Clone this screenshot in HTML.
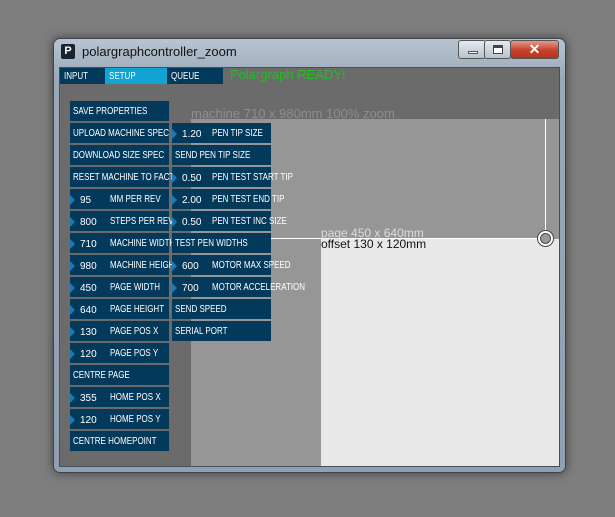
<!DOCTYPE html>
<html><head><style>
*{margin:0;padding:0;box-sizing:border-box}
body{width:615px;height:517px;background:#7e7e7e;position:relative;overflow:hidden;font-family:"Liberation Sans",sans-serif}
.win{position:absolute;left:53px;top:38px;width:513px;height:435px;border-radius:7px;background:linear-gradient(#b9c4d0,#9aa8b8 40px,#8fa0b2);box-shadow:0 0 10px rgba(0,0,0,.5);border:1px solid #3c4450}
.title{position:absolute;left:82px;top:44px;font-size:13px;color:#111}
.ico{position:absolute;left:61px;top:44px;width:14px;height:15px;background:#1a2430;border-radius:2px;color:#fff;font-size:11px;line-height:14px;text-align:center;font-weight:bold}
.client{position:absolute;left:59px;top:67px;width:501px;height:400px;background:#6b6b6b;overflow:hidden;border:1px solid #45505c}
.abs{position:absolute}
.b{position:absolute;width:99px;height:20px;background:#033a5b;color:#fff;font-size:10px;line-height:20px;white-space:nowrap;padding-left:3px;padding-top:1px}
.b s{text-decoration:none;display:inline-block;transform:scaleX(.8);transform-origin:0 50%;line-height:20px;vertical-align:top}
.b .n{position:absolute;left:10px;top:2px}
.b .l{position:absolute;left:40px;top:1px}
.b .t{position:absolute;left:0;top:6px;width:0;height:0;border-top:5px solid transparent;border-bottom:5px solid transparent;border-left:5px solid #1a7ab5}
.tab{position:absolute;top:0;height:16px;font-size:10px;line-height:17px;color:#fff;padding-left:4px;background:#033a5b}
.tab s{text-decoration:none;display:inline-block;transform:scaleX(.8);transform-origin:0 50%}
.btn{position:absolute;top:40px;height:19px;border:1px solid #555;border-radius:3px}
</style></head><body>
<div class="win"></div>
<div class="ico">P</div>
<div class="title">polargraphcontroller_zoom</div>
<div class="btn" style="left:458px;width:28px;background:linear-gradient(#e6eaf0,#b7c2cf)"><div class="abs" style="left:9px;top:10px;width:10px;height:3px;background:#fff;border:1px solid #555"></div></div>
<div class="btn" style="left:484px;width:27px;background:linear-gradient(#e6eaf0,#b7c2cf)"><div class="abs" style="left:8px;top:4px;width:10px;height:9px;border:1px solid #444;border-top-width:3px;background:#fff"></div></div>
<div class="btn" style="left:510px;width:49px;background:linear-gradient(#e59a8a,#c7412a 55%,#b43420);color:#fff;font-size:14px;text-align:center;line-height:17px;font-weight:bold">✕</div>
<div class="client">
 <div class="tab" style="left:0;width:45px"><s>INPUT</s></div>
 <div class="tab" style="left:45px;width:62px;background:#11a3d3"><s>SETUP</s></div>
 <div class="tab" style="left:107px;width:56px"><s>QUEUE</s></div>
 <div class="abs" style="left:170px;top:-1px;font-size:13px;color:#1fbf1f">Polargraph READY!</div>
 <div class="abs" style="left:131px;top:51px;width:370px;height:350px;background:#969696"></div>
 <div class="abs" style="left:131px;top:38px;font-size:13px;color:#8e8e8e;white-space:nowrap">machine 710 x 980mm 100% zoom</div>
 <div class="abs" style="left:261px;top:171px;width:240px;height:230px;background:#e8e8e8"></div>
 <div class="abs" style="left:131px;top:170px;width:350px;height:1px;background:#fff"></div>
 <div class="abs" style="left:485px;top:51px;width:1px;height:113px;background:#fff"></div>
 <div class="abs" style="left:478px;top:163px;width:15px;height:15px;border:2px solid #fff;border-radius:50%;box-shadow:0 0 0 1px #444,inset 0 0 0 1px #444;background:#999"></div>
 <div class="abs" style="left:261px;top:158px;font-size:12px;color:#ddd;white-space:nowrap">page 450 x 640mm</div>
 <div class="abs" style="left:261px;top:169px;font-size:12px;color:#111;white-space:nowrap">offset 130 x 120mm</div>
</div>
<div class="b" style="left:70px;top:101px"><s>SAVE PROPERTIES</s></div>
<div class="b" style="left:70px;top:123px"><s>UPLOAD MACHINE SPEC</s></div>
<div class="b" style="left:70px;top:145px"><s>DOWNLOAD SIZE SPEC</s></div>
<div class="b" style="left:70px;top:167px"><s>RESET MACHINE TO FACTORY</s></div>
<div class="b" style="left:70px;top:189px"><i class="t"></i><span class="n">95</span><span class="l"><s>MM PER REV</s></span></div>
<div class="b" style="left:70px;top:211px"><i class="t"></i><span class="n">800</span><span class="l"><s>STEPS PER REV</s></span></div>
<div class="b" style="left:70px;top:233px"><i class="t"></i><span class="n">710</span><span class="l"><s>MACHINE WIDTH</s></span></div>
<div class="b" style="left:70px;top:255px"><i class="t"></i><span class="n">980</span><span class="l"><s>MACHINE HEIGHT</s></span></div>
<div class="b" style="left:70px;top:277px"><i class="t"></i><span class="n">450</span><span class="l"><s>PAGE WIDTH</s></span></div>
<div class="b" style="left:70px;top:299px"><i class="t"></i><span class="n">640</span><span class="l"><s>PAGE HEIGHT</s></span></div>
<div class="b" style="left:70px;top:321px"><i class="t"></i><span class="n">130</span><span class="l"><s>PAGE POS X</s></span></div>
<div class="b" style="left:70px;top:343px"><i class="t"></i><span class="n">120</span><span class="l"><s>PAGE POS Y</s></span></div>
<div class="b" style="left:70px;top:365px"><s>CENTRE PAGE</s></div>
<div class="b" style="left:70px;top:387px"><i class="t"></i><span class="n">355</span><span class="l"><s>HOME POS X</s></span></div>
<div class="b" style="left:70px;top:409px"><i class="t"></i><span class="n">120</span><span class="l"><s>HOME POS Y</s></span></div>
<div class="b" style="left:70px;top:431px"><s>CENTRE HOMEPOINT</s></div>
<div class="b" style="left:172px;top:123px"><i class="t"></i><span class="n">1.20</span><span class="l"><s>PEN TIP SIZE</s></span></div>
<div class="b" style="left:172px;top:145px"><s>SEND PEN TIP SIZE</s></div>
<div class="b" style="left:172px;top:167px"><i class="t"></i><span class="n">0.50</span><span class="l"><s>PEN TEST START TIP</s></span></div>
<div class="b" style="left:172px;top:189px"><i class="t"></i><span class="n">2.00</span><span class="l"><s>PEN TEST END TIP</s></span></div>
<div class="b" style="left:172px;top:211px"><i class="t"></i><span class="n">0.50</span><span class="l"><s>PEN TEST INC SIZE</s></span></div>
<div class="b" style="left:172px;top:233px"><s>TEST PEN WIDTHS</s></div>
<div class="b" style="left:172px;top:255px"><i class="t"></i><span class="n">600</span><span class="l"><s>MOTOR MAX SPEED</s></span></div>
<div class="b" style="left:172px;top:277px"><i class="t"></i><span class="n">700</span><span class="l"><s>MOTOR ACCELERATION</s></span></div>
<div class="b" style="left:172px;top:299px"><s>SEND SPEED</s></div>
<div class="b" style="left:172px;top:321px"><s>SERIAL PORT</s></div>
</body></html>
